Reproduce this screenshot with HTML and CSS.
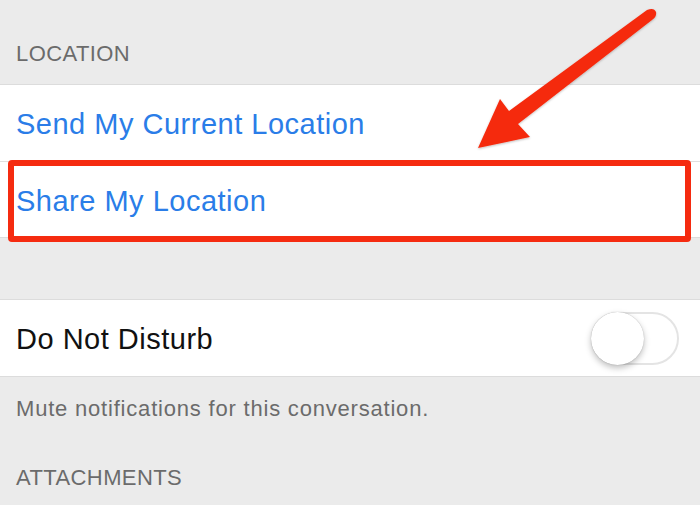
FILE: index.html
```html
<!DOCTYPE html>
<html>
<head>
<meta charset="utf-8">
<link rel="stylesheet" href="styles.css">
</head>
<body>
<div class="page">
  <div class="section-header first">LOCATION</div>
  <div class="group">
    <div class="row link">Send My Current Location</div>
    <div class="row link highlighted">Share My Location<div class="callout"></div></div>
  </div>
  <div class="spacer"></div>
  <div class="group">
    <div class="row plain">
      <span>Do Not Disturb</span>
      <div class="toggle"><div class="knob"></div></div>
    </div>
  </div>
  <div class="section-footer">Mute notifications for this conversation.</div>
  <div class="section-header last">ATTACHMENTS</div>
  <svg class="arrow" width="700" height="200" viewBox="0 0 700 200">
    <defs>
      <filter id="sh" x="-10%" y="-10%" width="120%" height="120%">
        <feDropShadow dx="0" dy="1" stdDeviation="1.2" flood-color="#000" flood-opacity="0.25"/>
      </filter>
    </defs>
    <path filter="url(#sh)" d="M478 148 L500 99 L509 111 L647 10 Q654 7 656 12 Q657 17 652 20 L518 124 L530 137 Z" fill="#f52b10"/>
  </svg>
</div>
</body>
</html>
```
FILE: styles.css
```css
html, body {
  margin: 0;
  padding: 0;
}
body {
  background: #ebebeb;
  font-family: "Liberation Sans", Arial, sans-serif;
}
.page {
  position: relative;
  width: 700px;
  height: 505px;
  overflow: hidden;
  background: #ebebeb;
}
.section-header {
  box-sizing: border-box;
  padding: 0 16px;
  font-size: 22px;
  line-height: 26px;
  letter-spacing: 0.4px;
  color: #6b6b6b;
}
.section-header.first {
  height: 84px;
  padding-top: 41px;
}
.section-header.last {
  padding-top: 29px;
}
.group {
  background: #fff;
  border-top: 1px solid #dcdcdc;
  border-bottom: 1px solid #dcdcdc;
}
.row {
  position: relative;
  box-sizing: border-box;
  height: 76px;
  display: flex;
  align-items: center;
  padding: 3px 16px 0;
  font-size: 29px;
  letter-spacing: 0.5px;
}
.row + .row {
  border-top: 1px solid #e0e0e0;
}
.link {
  color: #2a7de8;
}
.plain {
  color: #111;
  justify-content: space-between;
  padding-top: 0;
}
.plain span {
  padding-top: 3px;
}
.callout {
  position: absolute;
  left: 8px;
  top: -2px;
  right: 9px;
  bottom: -5px;
  border: 6px solid #f52b10;
  border-radius: 4px;
}
.spacer {
  height: 61px;
}
.toggle {
  position: relative;
  box-sizing: border-box;
  width: 88px;
  height: 53px;
  margin-right: 5px;
  border: 2px solid #e4e4e4;
  border-radius: 27px;
  background: #fff;
}
.knob {
  position: absolute;
  left: -2px;
  top: -2px;
  width: 53px;
  height: 53px;
  border-radius: 50%;
  background: #fff;
  box-shadow: 0 3px 6px rgba(0,0,0,0.25), 0 0 1px rgba(0,0,0,0.3);
}
.section-footer {
  padding: 19px 16px 0;
  height: 40px;
  font-size: 22px;
  line-height: 26px;
  letter-spacing: 0.8px;
  color: #6b6b6b;
}
.arrow {
  position: absolute;
  left: 0;
  top: 0;
}
```
